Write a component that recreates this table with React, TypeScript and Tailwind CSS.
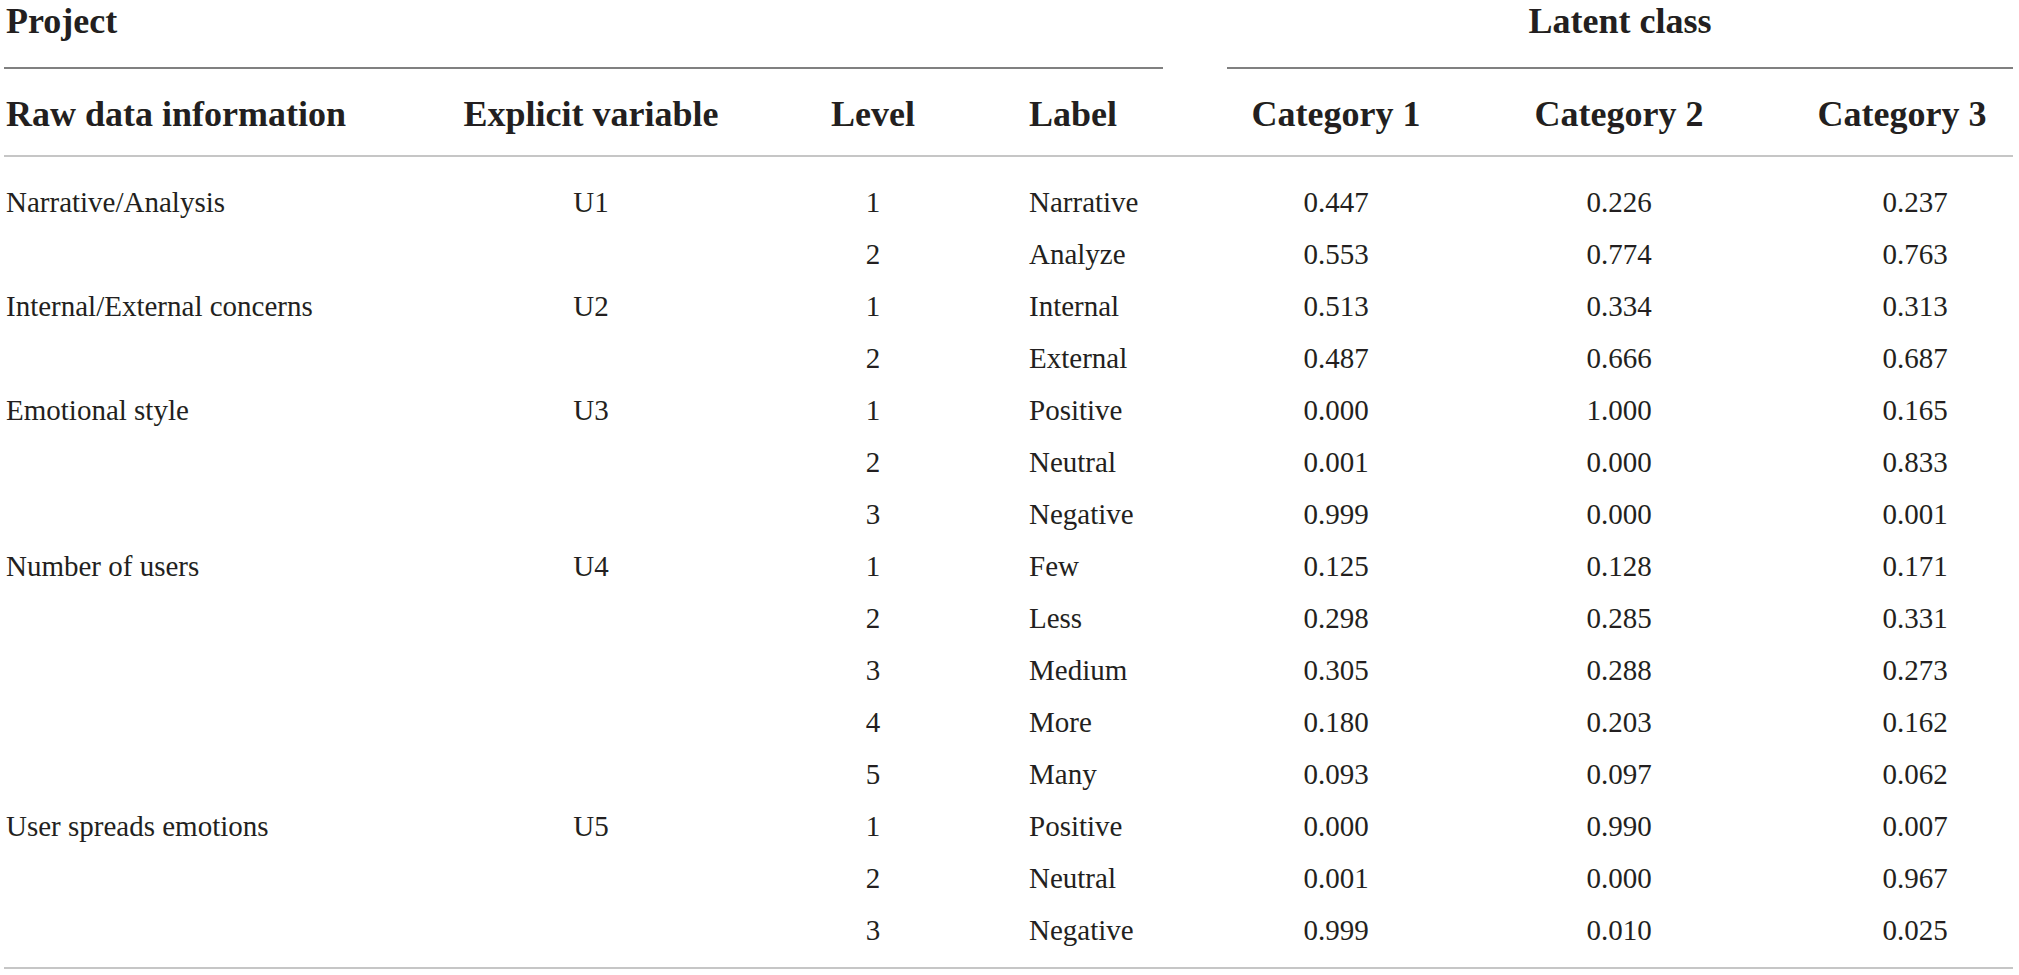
const cols = 'grid grid-cols-[446px_282px_282px_181px_282px_284px_252px]';

type Row = [string, string, string, string, string, string, string];

const rows: Row[] = [
  ['Narrative/Analysis', 'U1', '1', 'Narrative', '0.447', '0.226', '0.237'],
  ['', '', '2', 'Analyze', '0.553', '0.774', '0.763'],
  ['Internal/External concerns', 'U2', '1', 'Internal', '0.513', '0.334', '0.313'],
  ['', '', '2', 'External', '0.487', '0.666', '0.687'],
  ['Emotional style', 'U3', '1', 'Positive', '0.000', '1.000', '0.165'],
  ['', '', '2', 'Neutral', '0.001', '0.000', '0.833'],
  ['', '', '3', 'Negative', '0.999', '0.000', '0.001'],
  ['Number of users', 'U4', '1', 'Few', '0.125', '0.128', '0.171'],
  ['', '', '2', 'Less', '0.298', '0.285', '0.331'],
  ['', '', '3', 'Medium', '0.305', '0.288', '0.273'],
  ['', '', '4', 'More', '0.180', '0.203', '0.162'],
  ['', '', '5', 'Many', '0.093', '0.097', '0.062'],
  ['User spreads emotions', 'U5', '1', 'Positive', '0.000', '0.990', '0.007'],
  ['', '', '2', 'Neutral', '0.001', '0.000', '0.967'],
  ['', '', '3', 'Negative', '0.999', '0.010', '0.025'],
];

export default function App() {
  return (
    <div className="min-h-screen bg-white font-['Liberation_Serif',serif] text-[#231f20]">
      <div className="ml-[4px] w-[2009px]">
        {/* Spanning header */}
        <div className={`${cols} text-[36px] font-bold`}>
          <div className="col-span-4 mr-[32px] h-[69px] border-b-2 border-[#808080] pl-[2px] leading-[42px]">
            Project
          </div>
          <div className="col-span-3 ml-[32px] h-[69px] border-b-2 border-[#808080] text-center leading-[42px]">
            Latent class
          </div>
        </div>

        {/* Column headers */}
        <div className={`${cols} h-[88px] border-b-2 border-[#c6c6c6] pt-[5px] text-[36px] font-bold leading-[81px] whitespace-nowrap`}>
          <div className="pl-[2px]">Raw data information</div>
          <div className="text-center">Explicit variable</div>
          <div className="text-center">Level</div>
          <div className="pl-[15px]">Label</div>
          <div className="text-center">Category 1</div>
          <div className="text-center">Category 2</div>
          <div className="pl-[30px] text-center">Category 3</div>
        </div>

        {/* Body */}
        <div className="border-b-2 border-[#c6c6c6] pt-[19px] pb-[11px] text-[29px] leading-[52px] whitespace-nowrap">
          {rows.map((r, i) => (
            <div key={i} className={`${cols} h-[52px]`}>
              <div className="pl-[2px]">{r[0]}</div>
              <div className="text-center">{r[1]}</div>
              <div className="text-center">{r[2]}</div>
              <div className="pl-[15px]">{r[3]}</div>
              <div className="text-center">{r[4]}</div>
              <div className="text-center">{r[5]}</div>
              <div className="pl-[56px] text-center">{r[6]}</div>
            </div>
          ))}
        </div>
      </div>
    </div>
  );
}
